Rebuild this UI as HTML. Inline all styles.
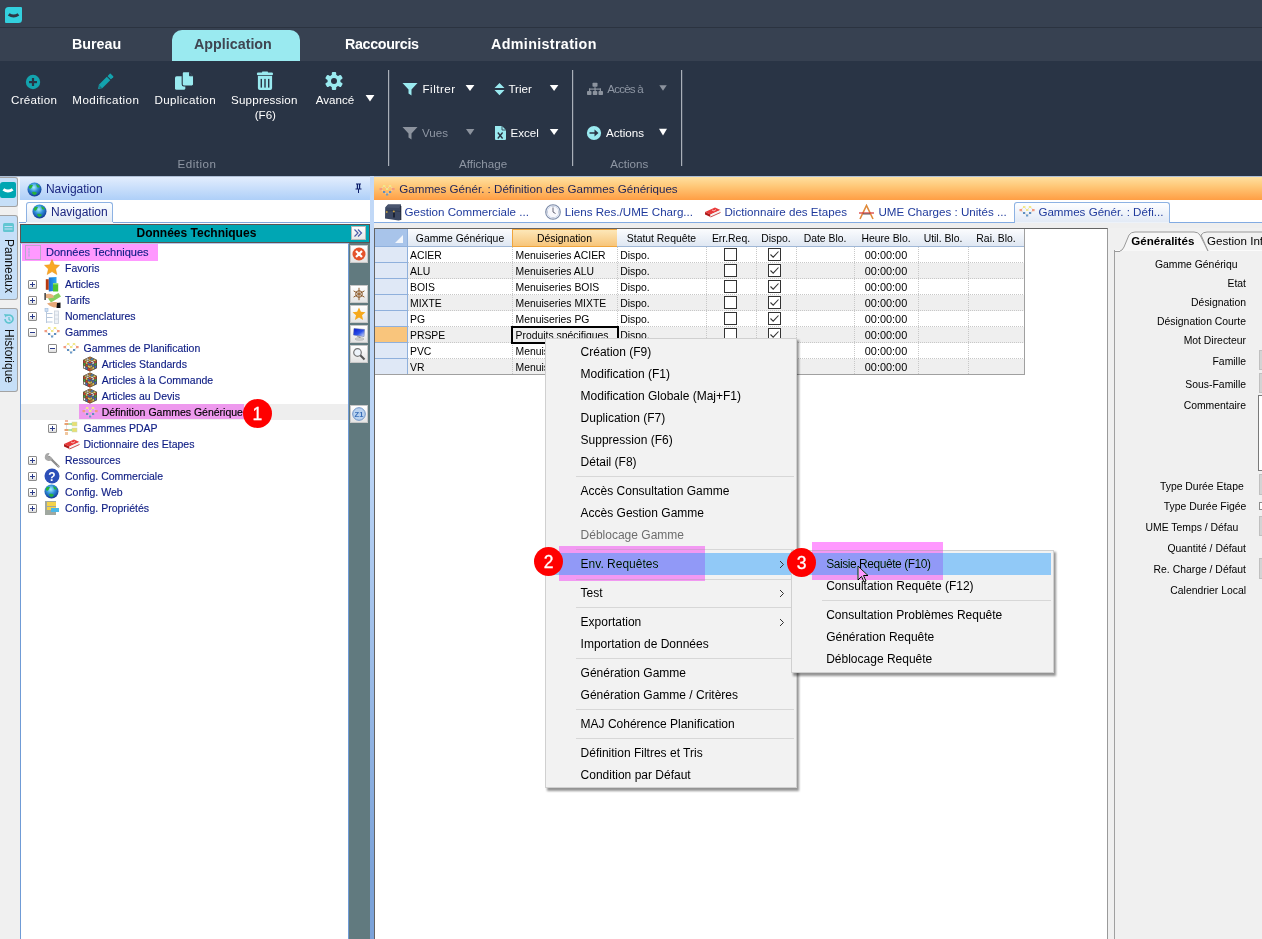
<!DOCTYPE html>
<html><head><meta charset="utf-8">
<style>
*{box-sizing:border-box;margin:0;padding:0}
html,body{width:1262px;height:939px;overflow:hidden;background:#f0f0f0;font-family:"Liberation Sans",sans-serif;position:relative}
.a{position:absolute}
.t{position:absolute;white-space:pre;line-height:1}
.s{-webkit-text-stroke:0.15px currentColor}
</style></head><body>

<div class="a" style="left:0px;top:0px;width:1262px;height:27px;background:#374151"></div>
<div class="a" style="left:0px;top:27px;width:1262px;height:1px;background:#2b3340"></div>
<div class="a" style="left:0px;top:28px;width:1262px;height:33px;background:#374151"></div>
<div class="a" style="left:5px;top:7px;width:17px;height:16px;background:#33d0de;border-radius:3.5px 1px 3.5px 1px"></div>
<svg class="a" style="left:5px;top:7px" width="17" height="16"><path d="M2.8 8.4 L4.6 6.2 Q8.6 8.8 12.6 6.2 L14.3 8.4 Q8.6 12.6 2.8 8.4Z" fill="#2f3746"/></svg>
<div class="a" style="left:172px;top:30px;width:128px;height:31px;background:#9aeaf0;border-radius:10px 10px 0 0"></div>
<div class="t " style="left:72.0px;top:37px;font-size:14.3px;color:#fff;font-weight:bold;">Bureau</div>
<div class="t " style="left:194.0px;top:37px;font-size:14.3px;color:#3f4652;font-weight:bold;">Application</div>
<div class="t " style="left:345.0px;top:37px;font-size:14.3px;color:#fff;font-weight:bold;letter-spacing:-0.34px">Raccourcis</div>
<div class="t " style="left:491.0px;top:37px;font-size:14.3px;color:#fff;font-weight:bold;letter-spacing:0.35px">Administration</div>
<div class="a" style="left:0px;top:61px;width:1262px;height:115px;background:#293445"></div>
<svg class="a" style="left:0;top:61px" width="700" height="115" viewBox="0 61 700 115">
 <!-- creation -->
 <circle cx="33" cy="82" r="7.2" fill="#13a3ae"/>
 <rect x="29" y="81" width="8" height="2.2" fill="#293445"/>
 <rect x="31.9" y="78" width="2.2" height="8" fill="#293445"/>
 <!-- pencil -->
 <g transform="translate(105,82) rotate(-45)" fill="#13a3ae">
  <path d="M-9.8 0 L-6.3 -2.4 V2.4 Z"/>
  <rect x="-6.3" y="-2.4" width="11.3" height="4.8"/>
  <rect x="5.9" y="-2.4" width="3.9" height="4.8" rx="0.6"/>
 </g>
 <path d="M99.2 86.6 L100.6 88" stroke="#283342" stroke-width="0.8"/>
 <!-- duplication -->
 <rect x="175" y="76.2" width="10.3" height="13.6" rx="1.6" fill="#9aeaf0"/>
 <path d="M182.2 73.2 Q182.2 71.6 183.8 71.6 H189.3 L193.6 75.9 V84.3 Q193.6 86 191.9 86 H183.8 Q182.2 86 182.2 84.3 Z" fill="#9aeaf0" stroke="#283342" stroke-width="1.1"/>
 <path d="M189.5 72.3 V75.8 H193" fill="#293445" stroke="#283342" stroke-width="0.9"/>
 <!-- trash -->
 <rect x="256.9" y="72.6" width="16.1" height="2.6" rx="1.2" fill="#9aeaf0"/>
 <rect x="262" y="71.6" width="6" height="1.6" rx="0.6" fill="#9aeaf0"/>
 <path d="M257.9 76 H272.1 V88 Q272.1 89.9 270.2 89.9 H259.8 Q257.9 89.9 257.9 88 Z" fill="#9aeaf0"/>
 <rect x="260.6" y="78.9" width="1.4" height="8.7" fill="#293445"/>
 <rect x="264.3" y="78.9" width="1.4" height="8.7" fill="#293445"/>
 <rect x="268" y="78.9" width="1.4" height="8.7" fill="#293445"/>
 <!-- gear -->
 <g transform="translate(334,81)" fill="#9aeaf0">
  <circle r="6.5"/>
  <g id="teeth"><rect x="-2.2" y="-9" width="4.4" height="18" rx="1"/><rect x="-2.2" y="-9" width="4.4" height="18" rx="1" transform="rotate(60)"/><rect x="-2.2" y="-9" width="4.4" height="18" rx="1" transform="rotate(120)"/></g>
  <circle r="3" fill="#293445"/>
 </g>
 <path d="M365.6 95 H374.4 L370 101.5 Z" fill="#fff"/>
 <rect x="388" y="70" width="1.2" height="96" fill="#a9afb8"/>
 <!-- filtrer -->
 <path d="M402.5 83 H417.5 L411.5 89.5 V95.5 L408.5 93.5 V89.5 Z" fill="#9aeaf0"/>
 <path d="M465.6 85 H474.4 L470 91 Z" fill="#fff"/>
 <!-- trier -->
 <path d="M499.5 83 L504.5 88 H494.5 Z M494.5 90 H504.5 L499.5 95.2 Z" fill="#9aeaf0"/>
 <path d="M549.8 85 H558.4 L554.1 91 Z" fill="#fff"/>
 <!-- vues -->
 <path d="M402.5 127 H417.5 L411.5 133.5 V139.5 L408.5 137.5 V133.5 Z" fill="#8c939e"/>
 <path d="M466 129 H474.4 L470.2 135 Z" fill="#8c939e"/>
 <!-- excel -->
 <path d="M495 126 H502 L506 130 V139 Q506 140 505 140 H496 Q495 140 495 139 Z" fill="#9aeaf0"/>
 <path d="M502 126 V130 H506" fill="none" stroke="#283342" stroke-width="0.8"/>
 <path d="M497.8 132.5 L502.6 138.5 M502.6 132.5 L497.8 138.5" stroke="#283342" stroke-width="1.3"/>
 <path d="M549.8 129 H558.4 L554.1 135 Z" fill="#fff"/>
 <rect x="572" y="70" width="1.2" height="96" fill="#a9afb8"/>
 <!-- acces a -->
 <g fill="#8c939e">
  <rect x="592.5" y="82.8" width="5" height="4" rx="0.8"/>
  <rect x="594.5" y="86.5" width="1" height="3"/>
  <rect x="589" y="88.5" width="12" height="1.2"/>
  <rect x="589" y="88.5" width="1.2" height="3"/><rect x="594.5" y="88.5" width="1.2" height="3"/><rect x="599.8" y="88.5" width="1.2" height="3"/>
  <rect x="587" y="91" width="4.5" height="4" rx="0.8"/><rect x="592.8" y="91" width="4.5" height="4" rx="0.8"/><rect x="598.5" y="91" width="4.5" height="4" rx="0.8"/>
 </g>
 <path d="M659.3 85.2 H666.8 L663 90.8 Z" fill="#8c939e"/>
 <!-- actions -->
 <circle cx="594" cy="133" r="7.1" fill="#9aeaf0"/>
 <path d="M589.5 132.2 H594.5 V129.5 L598.5 133 L594.5 136.5 V133.8 H589.5 Z" fill="#293445"/>
 <path d="M659 128.8 H667 L663 135.4 Z" fill="#fff"/>
 <rect x="681" y="70" width="1.2" height="96" fill="#a9afb8"/>
</svg>
<div class="t " style="left:11.0px;top:94px;font-size:11.6px;color:#ffffff;font-weight:normal;letter-spacing:0.3px">Création</div>
<div class="t " style="left:72.3px;top:94px;font-size:11.6px;color:#ffffff;font-weight:normal;letter-spacing:0.43px">Modification</div>
<div class="t " style="left:154.4px;top:94px;font-size:11.6px;color:#ffffff;font-weight:normal;letter-spacing:0.39px">Duplication</div>
<div class="t " style="left:231.0px;top:94px;font-size:11.6px;color:#ffffff;font-weight:normal;letter-spacing:0.2px">Suppression</div>
<div class="t " style="left:254.7px;top:109px;font-size:11.6px;color:#ffffff;font-weight:normal;letter-spacing:0px">(F6)</div>
<div class="t " style="left:315.7px;top:94px;font-size:11.6px;color:#ffffff;font-weight:normal;letter-spacing:0px">Avancé</div>
<div class="t " style="left:422.5px;top:83px;font-size:11.6px;color:#ffffff;font-weight:normal;letter-spacing:0.5px">Filtrer</div>
<div class="t " style="left:508.4px;top:83px;font-size:11.6px;color:#ffffff;font-weight:normal;letter-spacing:0px">Trier</div>
<div class="t " style="left:510.5px;top:127px;font-size:11.6px;color:#ffffff;font-weight:normal;letter-spacing:0px">Excel</div>
<div class="t " style="left:606.0px;top:127px;font-size:11.6px;color:#ffffff;font-weight:normal;letter-spacing:0px">Actions</div>
<div class="t " style="left:177.5px;top:158px;font-size:11.6px;color:#8e96a3;font-weight:normal;letter-spacing:0.48px">Edition</div>
<div class="t " style="left:422.0px;top:127px;font-size:11.6px;color:#8e96a3;font-weight:normal;letter-spacing:0px">Vues</div>
<div class="t " style="left:459.0px;top:158px;font-size:11.6px;color:#8e96a3;font-weight:normal;letter-spacing:0px">Affichage</div>
<div class="t " style="left:607.3px;top:83px;font-size:11.6px;color:#8e96a3;font-weight:normal;letter-spacing:-0.8px">Accès à</div>
<div class="t " style="left:610.3px;top:158px;font-size:11.6px;color:#8e96a3;font-weight:normal;letter-spacing:0px">Actions</div>
<div class="a" style="left:0px;top:176px;width:1262px;height:1px;background:#aebfd6"></div>
<div class="a" style="left:0px;top:177px;width:1262px;height:762px;background:#f0f0f0"></div>
<div class="a" style="left:0px;top:177px;width:18px;height:30px;background:#c6dff8;border:1px solid #a3a3a3;border-left:none;border-radius:0 3px 3px 0"></div>
<div class="a" style="left:0px;top:182px;width:16px;height:16px;background:#00a6b2;border-radius:3px 2px 3px 2px"></div>
<svg class="a" style="left:0;top:182px" width="16" height="16"><path d="M2.5 8.4 L4.2 6.3 Q8 8.8 11.8 6.3 L13.5 8.4 Q8 12.4 2.5 8.4Z" fill="#fff"/></svg>
<div class="a" style="left:0px;top:215px;width:18px;height:85px;background:#c6dff8;border:1px solid #a3a3a3;border-left:none;border-radius:0 3px 3px 0"></div>
<div class="a" style="left:0px;top:308px;width:18px;height:84px;background:#c6dff8;border:1px solid #a3a3a3;border-left:none;border-radius:0 3px 3px 0"></div>
<svg class="a" style="left:3px;top:223px" width="11" height="10"><rect x="0" y="0" width="11" height="9" rx="1.5" fill="#62c6d2"/><rect x="1.5" y="3" width="8" height="1" fill="#c6dff8"/><rect x="1.5" y="5.5" width="8" height="1" fill="#c6dff8"/></svg>
<div class="t" style="left:3px;top:239px;font-size:12px;color:#111;transform-origin:0 0;transform:translate(11.5px,0) rotate(90deg)">Panneaux</div>
<svg class="a" style="left:3px;top:313px" width="11" height="12"><path d="M2 6 A4 4 0 1 0 4 2.5" fill="none" stroke="#5cc4cf" stroke-width="1.6"/><path d="M1 1 L5 1.5 L2.5 4.5Z" fill="#5cc4cf"/><path d="M6 4 V6.5 L7.5 7.5" stroke="#5cc4cf" stroke-width="1.2" fill="none"/></svg>
<div class="t" style="left:3px;top:329px;font-size:12px;color:#111;transform-origin:0 0;transform:translate(11.5px,0) rotate(90deg)">Historique</div>
<div class="a" style="left:18px;top:177px;width:2px;height:23px;background:#f4f6f9"></div>
<div class="a" style="left:20px;top:177px;width:350px;height:23px;background:linear-gradient(#e2edfd,#aecff8)"></div>
<svg class="a" style="left:27px;top:182px" width="15" height="15" viewBox="0 0 15 15"><defs><radialGradient id="gg1" cx="0.45" cy="0.35" r="0.7"><stop offset="0" stop-color="#a8f0ff"/><stop offset="0.45" stop-color="#2f8fd8"/><stop offset="1" stop-color="#0c2a8a"/></radialGradient></defs><circle cx="7.5" cy="7.5" r="7" fill="url(#gg1)"/><path d="M2 4 Q4 2 6 3 Q5 6 3 7 Q1.5 6 2 4Z M9 2 Q12 3 13 5 Q11 6 10 5Z M5 10 Q8 9 10 11 Q9 13 7 13 Q5 12 5 10Z" fill="#27b33a"/></svg>
<div class="t " style="left:45.9px;top:183px;font-size:12px;color:#1b2780;font-weight:normal;">Navigation</div>
<svg class="a" style="left:354px;top:183px" width="9" height="10"><path d="M2 0.5 H7 V1.5 H6.2 V5.5 H7.5 V6.5 H5 V10 H4 V6.5 H1.5 V5.5 H2.8 V1.5 H2Z" fill="#0e1f6a"/><rect x="4" y="1.5" width="1" height="4" fill="#b9d5f7"/></svg>
<div class="a" style="left:18px;top:200px;width:352px;height:22px;background:#fff"></div>
<div class="a" style="left:26px;top:202px;width:87px;height:21px;background:linear-gradient(#fdfeff,#e2eaf5);border:1px solid #8db2e3;border-bottom:none;border-radius:3px 3px 0 0"></div>
<svg class="a" style="left:32px;top:204px" width="15" height="15" viewBox="0 0 15 15"><defs><radialGradient id="gg2" cx="0.45" cy="0.35" r="0.7"><stop offset="0" stop-color="#a8f0ff"/><stop offset="0.45" stop-color="#2f8fd8"/><stop offset="1" stop-color="#0c2a8a"/></radialGradient></defs><circle cx="7.5" cy="7.5" r="7" fill="url(#gg2)"/><path d="M2 4 Q4 2 6 3 Q5 6 3 7 Q1.5 6 2 4Z M9 2 Q12 3 13 5 Q11 6 10 5Z M5 10 Q8 9 10 11 Q9 13 7 13 Q5 12 5 10Z" fill="#27b33a"/></svg>
<div class="t " style="left:51.0px;top:206px;font-size:12px;color:#1b2780;font-weight:normal;">Navigation</div>
<div class="a" style="left:19px;top:222px;width:351px;height:1px;background:#7fa7de"></div>
<div class="a" style="left:26px;top:222px;width:87px;height:1px;background:#eef3fa"></div>
<div class="a" style="left:19px;top:223px;width:351px;height:1px;background:#fbfbfb"></div>
<div class="a" style="left:20px;top:224px;width:350px;height:19px;background:#00a6b4;border:1px solid #5e5252"></div>
<div class="t " style="left:136.5px;top:227px;font-size:12px;color:#000;font-weight:bold;">Données Techniques</div>
<div class="a" style="left:351px;top:226px;width:15px;height:14px;background:linear-gradient(#fff,#e9e9e9);border:1px solid #b9b9b9"></div>
<svg class="a" style="left:353px;top:228px" width="11" height="10"><path d="M1.5 1.5 L5 5 L1.5 8.5 M5 1.5 L8.5 5 L5 8.5" stroke="#4c5ca8" stroke-width="1.2" fill="none"/></svg>
<div class="a" style="left:20px;top:243px;width:329px;height:696px;background:#fff;border-left:1px solid #6f9bd6;border-right:1px solid #6f9bd6;border-top:1px solid #b4c8ea"></div>
<div class="a" style="left:349px;top:243px;width:21px;height:696px;background:#617a7f"></div>
<div class="a" style="left:370px;top:176px;width:4px;height:763px;background:linear-gradient(#c2d9f7 0px,#b9d3f5 300px,#7ba2d9 700px)"></div>
<div class="a" style="left:374px;top:228px;width:1px;height:711px;background:#5e6470"></div>
<div class="a" style="left:350px;top:245px;width:18px;height:18px;background:linear-gradient(#ffffff,#e4e4e4);border:1px solid #c8c8c8"></div>
<svg class="a" style="left:352px;top:247px" width="14" height="14"><circle cx="7" cy="7" r="6.5" fill="#e4532b"/><path d="M4 4 L10 10 M10 4 L4 10" stroke="#fff" stroke-width="2.2"/></svg>
<div class="a" style="left:350px;top:285px;width:18px;height:18px;background:linear-gradient(#ffffff,#e4e4e4);border:1px solid #c8c8c8"></div>
<svg class="a" style="left:352px;top:287px" width="14" height="14"><g stroke="#8b5a2b" fill="none"><circle cx="7" cy="7" r="3.3" stroke-width="1"/><path d="M7 0.8 V13.2 M1.6 3.9 L12.4 10.1 M1.6 10.1 L12.4 3.9" stroke-width="1"/></g><circle cx="7" cy="7" r="1.2" fill="#a07040"/></svg>
<div class="a" style="left:350px;top:305px;width:18px;height:18px;background:linear-gradient(#ffffff,#e4e4e4);border:1px solid #c8c8c8"></div>
<svg class="a" style="left:352px;top:307px" width="14" height="14"><path d="M7 0.5 L8.9 4.8 L13.5 5.2 L10 8.3 L11.1 13 L7 10.5 L2.9 13 L4 8.3 L0.5 5.2 L5.1 4.8Z" fill="#f6a81c"/></svg>
<div class="a" style="left:350px;top:325px;width:18px;height:18px;background:linear-gradient(#ffffff,#e4e4e4);border:1px solid #c8c8c8"></div>
<svg class="a" style="left:352px;top:327px" width="14" height="14"><defs><linearGradient id="mon" x1="0" y1="0" x2="1" y2="1"><stop offset="0" stop-color="#0a1ad0"/><stop offset="0.55" stop-color="#2a50e8"/><stop offset="1" stop-color="#e8f0ff"/></linearGradient></defs><path d="M2 1.5 L12.5 2.5 L12 9.5 L1.5 8Z" fill="url(#mon)" stroke="#5060a0" stroke-width="0.5"/><path d="M5 9.5 L8.5 10 L8.5 11" stroke="#b0b0b0" stroke-width="1"/><ellipse cx="7.5" cy="12" rx="4.5" ry="1.3" fill="#d0d0d0" stroke="#a0a0a0" stroke-width="0.5"/></svg>
<div class="a" style="left:350px;top:345px;width:18px;height:18px;background:linear-gradient(#ffffff,#e4e4e4);border:1px solid #c8c8c8"></div>
<svg class="a" style="left:352px;top:347px" width="14" height="14"><circle cx="5.5" cy="5.5" r="3.8" fill="#eef4fb" stroke="#777" stroke-width="1.2"/><path d="M8.3 8.3 L12.5 12.5" stroke="#555" stroke-width="2"/></svg>
<div class="a" style="left:350px;top:405px;width:18px;height:18px;background:linear-gradient(#ffffff,#e4e4e4);border:1px solid #c8c8c8"></div>
<svg class="a" style="left:352px;top:407px" width="14" height="14"><circle cx="7" cy="7" r="6.3" fill="#b9d2ef" stroke="#6d93c6" stroke-width="1"/><text x="7" y="10" font-size="7.5" font-family="Liberation Sans" font-weight="bold" text-anchor="middle" fill="#3a6fb8">Z1</text></svg>
<div class="a" style="left:21px;top:404px;width:327px;height:16px;background:#eeeeee"></div>
<div class="a" style="left:22px;top:244px;width:136px;height:17px;background:#ff99ff;mix-blend-mode:darken"></div>
<div class="a" style="left:79px;top:404px;width:165px;height:15px;background:#ff99ff;mix-blend-mode:darken"></div>
<svg class="a" style="left:25px;top:245px" width="16" height="16"><rect x="0.5" y="0.5" width="15" height="14" fill="none" stroke="#b9a9c9" stroke-width="1"/><path d="M4 3 V12 M3 4 H5 M3 7 H5 M3 10 H5" stroke="#b0b0d8" stroke-width="0.8"/></svg>
<div class="t s" style="left:46.0px;top:247px;font-size:11px;color:#0e1d84;font-weight:normal;">Données Techniques</div>
<svg class="a" style="left:44px;top:259px" width="16" height="17"><path d="M8 0.5 L10.3 5.8 L15.5 6.3 L11.6 10 L12.8 15.5 L8 12.6 L3.2 15.5 L4.4 10 L0.5 6.3 L5.7 5.8Z" fill="#f9a825" stroke="#e88a10" stroke-width="0.5"/></svg>
<div class="t s" style="left:65.0px;top:263px;font-size:10.5px;color:#0e1d84;font-weight:normal;">Favoris</div>
<div class="a" style="left:28px;top:280px;width:9px;height:9px;background:linear-gradient(#fff 40%,#dcdcdc);border:1px solid #8c8c8c;border-radius:1px"></div>
<div class="a" style="left:30px;top:284px;width:5px;height:1px;background:#2b3b8a"></div>
<div class="a" style="left:32px;top:282px;width:1px;height:5px;background:#2b3b8a"></div>
<svg class="a" style="left:44px;top:276px" width="16" height="16"><defs><linearGradient id="bk" x1="0" x2="1"><stop offset="0" stop-color="#1a6fd0"/><stop offset="1" stop-color="#29a8f5"/></linearGradient></defs><rect x="1.8" y="3.2" width="3" height="10.6" fill="#b83a10"/><path d="M4.8 1.5 L12.5 1 V14.8 L4.8 15.4Z" fill="url(#bk)"/><rect x="9" y="7.2" width="5.2" height="8.2" rx="0.5" fill="#4cc430"/><rect x="9" y="7.2" width="5.2" height="1.2" fill="#9fe880"/></svg>
<div class="t s" style="left:65.0px;top:279px;font-size:10.5px;color:#0e1d84;font-weight:normal;">Articles</div>
<div class="a" style="left:28px;top:296px;width:9px;height:9px;background:linear-gradient(#fff 40%,#dcdcdc);border:1px solid #8c8c8c;border-radius:1px"></div>
<div class="a" style="left:30px;top:300px;width:5px;height:1px;background:#2b3b8a"></div>
<div class="a" style="left:32px;top:298px;width:1px;height:5px;background:#2b3b8a"></div>
<svg class="a" style="left:44px;top:292px" width="17" height="17"><path d="M4 6.5 L14.5 1 L17 4.5 L7 10.5Z" fill="#86d060"/><path d="M1.5 2.5 Q5 1 9 3 L10 5.5 Q6 6.5 2 6Z" fill="#e8b080"/><path d="M3 11.5 Q7 9.5 12 10 L16 11.5 V15 L10 15.5 Q5 14 3 11.5Z" fill="#e5a878"/><rect x="0.5" y="1" width="1.2" height="7" fill="#111"/><path d="M13 11 L16.5 10.5 V16 H12.5Z" fill="#111"/></svg>
<div class="t s" style="left:65.0px;top:295px;font-size:10.5px;color:#0e1d84;font-weight:normal;">Tarifs</div>
<div class="a" style="left:28px;top:312px;width:9px;height:9px;background:linear-gradient(#fff 40%,#dcdcdc);border:1px solid #8c8c8c;border-radius:1px"></div>
<div class="a" style="left:30px;top:316px;width:5px;height:1px;background:#2b3b8a"></div>
<div class="a" style="left:32px;top:314px;width:1px;height:5px;background:#2b3b8a"></div>
<svg class="a" style="left:44px;top:308px" width="16" height="16"><rect x="1" y="0.5" width="3" height="3" fill="#cfe0f4" stroke="#9ab8dc" stroke-width="0.6"/><path d="M2.5 3.5 V15 M2.5 5.5 H8.5 M2.5 9.5 H8.5 M2.5 14 H8.5" stroke="#b8c8dc" stroke-width="1"/><rect x="10.5" y="3" width="4" height="12.5" fill="#eef2f7" stroke="#c8d0da" stroke-width="0.8"/><path d="M10.5 7 H14.5 M10.5 11 H14.5" stroke="#c8d0da" stroke-width="0.8"/></svg>
<div class="t s" style="left:65.0px;top:311px;font-size:10.5px;color:#0e1d84;font-weight:normal;">Nomenclatures</div>
<div class="a" style="left:28px;top:328px;width:9px;height:9px;background:linear-gradient(#fff 40%,#dcdcdc);border:1px solid #8c8c8c;border-radius:1px"></div>
<div class="a" style="left:30px;top:332px;width:5px;height:1px;background:#2b3b8a"></div>
<svg class="a" style="left:44px;top:324px" width="16" height="16"><g fill="none" stroke="#e6ddd0" stroke-width="0.8"><path d="M1.5 7 L5 4 L8 7 L11 4 L14.5 7 L11 10 L8 12.5 L5 10Z"/></g><rect x="4" y="3" width="2.4" height="2" fill="#f2e88a"/><rect x="9.8" y="3" width="2.4" height="2" fill="#f2e88a"/><rect x="7" y="6" width="2.4" height="2" fill="#efe78a"/><rect x="0.5" y="6" width="2.6" height="2.2" fill="#f09a80"/><rect x="13" y="6" width="2.6" height="2.2" fill="#f09a80"/><rect x="4" y="9" width="2.2" height="2" fill="#5f8fc0"/><rect x="10" y="9" width="2.2" height="2" fill="#5f8fc0"/><rect x="7" y="11.5" width="2.2" height="2" fill="#6a9ac8"/></svg>
<div class="t s" style="left:65.0px;top:327px;font-size:10.5px;color:#0e1d84;font-weight:normal;">Gammes</div>
<div class="a" style="left:47.5px;top:344px;width:9px;height:9px;background:linear-gradient(#fff 40%,#dcdcdc);border:1px solid #8c8c8c;border-radius:1px"></div>
<div class="a" style="left:49.5px;top:348px;width:5px;height:1px;background:#2b3b8a"></div>
<svg class="a" style="left:63px;top:340px" width="16" height="16"><g fill="none" stroke="#e6ddd0" stroke-width="0.8"><path d="M1.5 7 L5 4 L8 7 L11 4 L14.5 7 L11 10 L8 12.5 L5 10Z"/></g><rect x="4" y="3" width="2.4" height="2" fill="#f2e88a"/><rect x="9.8" y="3" width="2.4" height="2" fill="#f2e88a"/><rect x="7" y="6" width="2.4" height="2" fill="#efe78a"/><rect x="0.5" y="6" width="2.6" height="2.2" fill="#f09a80"/><rect x="13" y="6" width="2.6" height="2.2" fill="#f09a80"/><rect x="4" y="9" width="2.2" height="2" fill="#5f8fc0"/><rect x="10" y="9" width="2.2" height="2" fill="#5f8fc0"/><rect x="7" y="11.5" width="2.2" height="2" fill="#6a9ac8"/></svg>
<div class="t s" style="left:83.5px;top:343px;font-size:10.5px;color:#0e1d84;font-weight:normal;">Gammes de Planification</div>
<svg class="a" style="left:82px;top:356px" width="16" height="16"><path d="M8 0.6 L15 4 V12.3 L8 15.6 L1 12.3 V4Z" fill="#5a4a38"/><polygon points="1.50,4.20 3.67,3.13 5.83,4.20 3.67,5.27" fill="#f0e060" stroke="#5a4a38" stroke-width="0.45"/><polygon points="1.50,4.20 3.67,5.27 3.67,7.87 1.50,6.80" fill="#e03a2a" stroke="#5a4a38" stroke-width="0.45"/><polygon points="8.00,7.40 10.17,6.33 10.17,8.87 8.00,9.93" fill="#3a70d0" stroke="#5a4a38" stroke-width="0.45"/><polygon points="3.67,3.13 5.83,2.07 8.00,3.13 5.83,4.20" fill="#f4f4f4" stroke="#5a4a38" stroke-width="0.45"/><polygon points="3.67,5.27 5.83,6.33 5.83,8.93 3.67,7.87" fill="#f0e060" stroke="#5a4a38" stroke-width="0.45"/><polygon points="10.17,6.33 12.33,5.27 12.33,7.80 10.17,8.87" fill="#f4f4f4" stroke="#5a4a38" stroke-width="0.45"/><polygon points="5.83,2.07 8.00,1.00 10.17,2.07 8.00,3.13" fill="#e88830" stroke="#5a4a38" stroke-width="0.45"/><polygon points="5.83,6.33 8.00,7.40 8.00,10.00 5.83,8.93" fill="#3a70d0" stroke="#5a4a38" stroke-width="0.45"/><polygon points="12.33,5.27 14.50,4.20 14.50,6.73 12.33,7.80" fill="#e03a2a" stroke="#5a4a38" stroke-width="0.45"/><polygon points="3.67,5.27 5.83,4.20 8.00,5.27 5.83,6.33" fill="#f4f4f4" stroke="#5a4a38" stroke-width="0.45"/><polygon points="1.50,6.80 3.67,7.87 3.67,10.47 1.50,9.40" fill="#40b040" stroke="#5a4a38" stroke-width="0.45"/><polygon points="8.00,9.93 10.17,8.87 10.17,11.40 8.00,12.47" fill="#f0e060" stroke="#5a4a38" stroke-width="0.45"/><polygon points="5.83,4.20 8.00,3.13 10.17,4.20 8.00,5.27" fill="#f0e060" stroke="#5a4a38" stroke-width="0.45"/><polygon points="3.67,7.87 5.83,8.93 5.83,11.53 3.67,10.47" fill="#e03a2a" stroke="#5a4a38" stroke-width="0.45"/><polygon points="10.17,8.87 12.33,7.80 12.33,10.33 10.17,11.40" fill="#3a70d0" stroke="#5a4a38" stroke-width="0.45"/><polygon points="8.00,3.13 10.17,2.07 12.33,3.13 10.17,4.20" fill="#4a9ae0" stroke="#5a4a38" stroke-width="0.45"/><polygon points="5.83,8.93 8.00,10.00 8.00,12.60 5.83,11.53" fill="#f0e060" stroke="#5a4a38" stroke-width="0.45"/><polygon points="12.33,7.80 14.50,6.73 14.50,9.27 12.33,10.33" fill="#40b040" stroke="#5a4a38" stroke-width="0.45"/><polygon points="5.83,6.33 8.00,5.27 10.17,6.33 8.00,7.40" fill="#e84030" stroke="#5a4a38" stroke-width="0.45"/><polygon points="1.50,9.40 3.67,10.47 3.67,13.07 1.50,12.00" fill="#f4f4f4" stroke="#5a4a38" stroke-width="0.45"/><polygon points="8.00,12.47 10.17,11.40 10.17,13.93 8.00,15.00" fill="#e88830" stroke="#5a4a38" stroke-width="0.45"/><polygon points="8.00,5.27 10.17,4.20 12.33,5.27 10.17,6.33" fill="#f4f4f4" stroke="#5a4a38" stroke-width="0.45"/><polygon points="3.67,10.47 5.83,11.53 5.83,14.13 3.67,13.07" fill="#3a70d0" stroke="#5a4a38" stroke-width="0.45"/><polygon points="10.17,11.40 12.33,10.33 12.33,12.87 10.17,13.93" fill="#f0e060" stroke="#5a4a38" stroke-width="0.45"/><polygon points="10.17,4.20 12.33,3.13 14.50,4.20 12.33,5.27" fill="#f0e060" stroke="#5a4a38" stroke-width="0.45"/><polygon points="5.83,11.53 8.00,12.60 8.00,15.20 5.83,14.13" fill="#e03a2a" stroke="#5a4a38" stroke-width="0.45"/><polygon points="12.33,10.33 14.50,9.27 14.50,11.80 12.33,12.87" fill="#3a70d0" stroke="#5a4a38" stroke-width="0.45"/></svg>
<div class="t s" style="left:101.7px;top:359px;font-size:10.5px;color:#0e1d84;font-weight:normal;">Articles Standards</div>
<svg class="a" style="left:82px;top:372px" width="16" height="16"><path d="M8 0.6 L15 4 V12.3 L8 15.6 L1 12.3 V4Z" fill="#5a4a38"/><polygon points="1.50,4.20 3.67,3.13 5.83,4.20 3.67,5.27" fill="#f0e060" stroke="#5a4a38" stroke-width="0.45"/><polygon points="1.50,4.20 3.67,5.27 3.67,7.87 1.50,6.80" fill="#e03a2a" stroke="#5a4a38" stroke-width="0.45"/><polygon points="8.00,7.40 10.17,6.33 10.17,8.87 8.00,9.93" fill="#3a70d0" stroke="#5a4a38" stroke-width="0.45"/><polygon points="3.67,3.13 5.83,2.07 8.00,3.13 5.83,4.20" fill="#f4f4f4" stroke="#5a4a38" stroke-width="0.45"/><polygon points="3.67,5.27 5.83,6.33 5.83,8.93 3.67,7.87" fill="#f0e060" stroke="#5a4a38" stroke-width="0.45"/><polygon points="10.17,6.33 12.33,5.27 12.33,7.80 10.17,8.87" fill="#f4f4f4" stroke="#5a4a38" stroke-width="0.45"/><polygon points="5.83,2.07 8.00,1.00 10.17,2.07 8.00,3.13" fill="#e88830" stroke="#5a4a38" stroke-width="0.45"/><polygon points="5.83,6.33 8.00,7.40 8.00,10.00 5.83,8.93" fill="#3a70d0" stroke="#5a4a38" stroke-width="0.45"/><polygon points="12.33,5.27 14.50,4.20 14.50,6.73 12.33,7.80" fill="#e03a2a" stroke="#5a4a38" stroke-width="0.45"/><polygon points="3.67,5.27 5.83,4.20 8.00,5.27 5.83,6.33" fill="#f4f4f4" stroke="#5a4a38" stroke-width="0.45"/><polygon points="1.50,6.80 3.67,7.87 3.67,10.47 1.50,9.40" fill="#40b040" stroke="#5a4a38" stroke-width="0.45"/><polygon points="8.00,9.93 10.17,8.87 10.17,11.40 8.00,12.47" fill="#f0e060" stroke="#5a4a38" stroke-width="0.45"/><polygon points="5.83,4.20 8.00,3.13 10.17,4.20 8.00,5.27" fill="#f0e060" stroke="#5a4a38" stroke-width="0.45"/><polygon points="3.67,7.87 5.83,8.93 5.83,11.53 3.67,10.47" fill="#e03a2a" stroke="#5a4a38" stroke-width="0.45"/><polygon points="10.17,8.87 12.33,7.80 12.33,10.33 10.17,11.40" fill="#3a70d0" stroke="#5a4a38" stroke-width="0.45"/><polygon points="8.00,3.13 10.17,2.07 12.33,3.13 10.17,4.20" fill="#4a9ae0" stroke="#5a4a38" stroke-width="0.45"/><polygon points="5.83,8.93 8.00,10.00 8.00,12.60 5.83,11.53" fill="#f0e060" stroke="#5a4a38" stroke-width="0.45"/><polygon points="12.33,7.80 14.50,6.73 14.50,9.27 12.33,10.33" fill="#40b040" stroke="#5a4a38" stroke-width="0.45"/><polygon points="5.83,6.33 8.00,5.27 10.17,6.33 8.00,7.40" fill="#e84030" stroke="#5a4a38" stroke-width="0.45"/><polygon points="1.50,9.40 3.67,10.47 3.67,13.07 1.50,12.00" fill="#f4f4f4" stroke="#5a4a38" stroke-width="0.45"/><polygon points="8.00,12.47 10.17,11.40 10.17,13.93 8.00,15.00" fill="#e88830" stroke="#5a4a38" stroke-width="0.45"/><polygon points="8.00,5.27 10.17,4.20 12.33,5.27 10.17,6.33" fill="#f4f4f4" stroke="#5a4a38" stroke-width="0.45"/><polygon points="3.67,10.47 5.83,11.53 5.83,14.13 3.67,13.07" fill="#3a70d0" stroke="#5a4a38" stroke-width="0.45"/><polygon points="10.17,11.40 12.33,10.33 12.33,12.87 10.17,13.93" fill="#f0e060" stroke="#5a4a38" stroke-width="0.45"/><polygon points="10.17,4.20 12.33,3.13 14.50,4.20 12.33,5.27" fill="#f0e060" stroke="#5a4a38" stroke-width="0.45"/><polygon points="5.83,11.53 8.00,12.60 8.00,15.20 5.83,14.13" fill="#e03a2a" stroke="#5a4a38" stroke-width="0.45"/><polygon points="12.33,10.33 14.50,9.27 14.50,11.80 12.33,12.87" fill="#3a70d0" stroke="#5a4a38" stroke-width="0.45"/></svg>
<div class="t s" style="left:101.7px;top:375px;font-size:10.5px;color:#0e1d84;font-weight:normal;">Articles à la Commande</div>
<svg class="a" style="left:82px;top:388px" width="16" height="16"><path d="M8 0.6 L15 4 V12.3 L8 15.6 L1 12.3 V4Z" fill="#5a4a38"/><polygon points="1.50,4.20 3.67,3.13 5.83,4.20 3.67,5.27" fill="#f0e060" stroke="#5a4a38" stroke-width="0.45"/><polygon points="1.50,4.20 3.67,5.27 3.67,7.87 1.50,6.80" fill="#e03a2a" stroke="#5a4a38" stroke-width="0.45"/><polygon points="8.00,7.40 10.17,6.33 10.17,8.87 8.00,9.93" fill="#3a70d0" stroke="#5a4a38" stroke-width="0.45"/><polygon points="3.67,3.13 5.83,2.07 8.00,3.13 5.83,4.20" fill="#f4f4f4" stroke="#5a4a38" stroke-width="0.45"/><polygon points="3.67,5.27 5.83,6.33 5.83,8.93 3.67,7.87" fill="#f0e060" stroke="#5a4a38" stroke-width="0.45"/><polygon points="10.17,6.33 12.33,5.27 12.33,7.80 10.17,8.87" fill="#f4f4f4" stroke="#5a4a38" stroke-width="0.45"/><polygon points="5.83,2.07 8.00,1.00 10.17,2.07 8.00,3.13" fill="#e88830" stroke="#5a4a38" stroke-width="0.45"/><polygon points="5.83,6.33 8.00,7.40 8.00,10.00 5.83,8.93" fill="#3a70d0" stroke="#5a4a38" stroke-width="0.45"/><polygon points="12.33,5.27 14.50,4.20 14.50,6.73 12.33,7.80" fill="#e03a2a" stroke="#5a4a38" stroke-width="0.45"/><polygon points="3.67,5.27 5.83,4.20 8.00,5.27 5.83,6.33" fill="#f4f4f4" stroke="#5a4a38" stroke-width="0.45"/><polygon points="1.50,6.80 3.67,7.87 3.67,10.47 1.50,9.40" fill="#40b040" stroke="#5a4a38" stroke-width="0.45"/><polygon points="8.00,9.93 10.17,8.87 10.17,11.40 8.00,12.47" fill="#f0e060" stroke="#5a4a38" stroke-width="0.45"/><polygon points="5.83,4.20 8.00,3.13 10.17,4.20 8.00,5.27" fill="#f0e060" stroke="#5a4a38" stroke-width="0.45"/><polygon points="3.67,7.87 5.83,8.93 5.83,11.53 3.67,10.47" fill="#e03a2a" stroke="#5a4a38" stroke-width="0.45"/><polygon points="10.17,8.87 12.33,7.80 12.33,10.33 10.17,11.40" fill="#3a70d0" stroke="#5a4a38" stroke-width="0.45"/><polygon points="8.00,3.13 10.17,2.07 12.33,3.13 10.17,4.20" fill="#4a9ae0" stroke="#5a4a38" stroke-width="0.45"/><polygon points="5.83,8.93 8.00,10.00 8.00,12.60 5.83,11.53" fill="#f0e060" stroke="#5a4a38" stroke-width="0.45"/><polygon points="12.33,7.80 14.50,6.73 14.50,9.27 12.33,10.33" fill="#40b040" stroke="#5a4a38" stroke-width="0.45"/><polygon points="5.83,6.33 8.00,5.27 10.17,6.33 8.00,7.40" fill="#e84030" stroke="#5a4a38" stroke-width="0.45"/><polygon points="1.50,9.40 3.67,10.47 3.67,13.07 1.50,12.00" fill="#f4f4f4" stroke="#5a4a38" stroke-width="0.45"/><polygon points="8.00,12.47 10.17,11.40 10.17,13.93 8.00,15.00" fill="#e88830" stroke="#5a4a38" stroke-width="0.45"/><polygon points="8.00,5.27 10.17,4.20 12.33,5.27 10.17,6.33" fill="#f4f4f4" stroke="#5a4a38" stroke-width="0.45"/><polygon points="3.67,10.47 5.83,11.53 5.83,14.13 3.67,13.07" fill="#3a70d0" stroke="#5a4a38" stroke-width="0.45"/><polygon points="10.17,11.40 12.33,10.33 12.33,12.87 10.17,13.93" fill="#f0e060" stroke="#5a4a38" stroke-width="0.45"/><polygon points="10.17,4.20 12.33,3.13 14.50,4.20 12.33,5.27" fill="#f0e060" stroke="#5a4a38" stroke-width="0.45"/><polygon points="5.83,11.53 8.00,12.60 8.00,15.20 5.83,14.13" fill="#e03a2a" stroke="#5a4a38" stroke-width="0.45"/><polygon points="12.33,10.33 14.50,9.27 14.50,11.80 12.33,12.87" fill="#3a70d0" stroke="#5a4a38" stroke-width="0.45"/></svg>
<div class="t s" style="left:101.7px;top:391px;font-size:10.5px;color:#0e1d84;font-weight:normal;">Articles au Devis</div>
<svg class="a" style="left:82px;top:404px" width="16" height="16"><g fill="none" stroke="#e6ddd0" stroke-width="0.8"><path d="M1.5 7 L5 4 L8 7 L11 4 L14.5 7 L11 10 L8 12.5 L5 10Z"/></g><rect x="4" y="3" width="2.4" height="2" fill="#f2e88a"/><rect x="9.8" y="3" width="2.4" height="2" fill="#f2e88a"/><rect x="7" y="6" width="2.4" height="2" fill="#efe78a"/><rect x="0.5" y="6" width="2.6" height="2.2" fill="#f09a80"/><rect x="13" y="6" width="2.6" height="2.2" fill="#f09a80"/><rect x="4" y="9" width="2.2" height="2" fill="#5f8fc0"/><rect x="10" y="9" width="2.2" height="2" fill="#5f8fc0"/><rect x="7" y="11.5" width="2.2" height="2" fill="#6a9ac8"/></svg>
<div class="t s" style="left:101.7px;top:407px;font-size:10.5px;color:#000;font-weight:normal;">Définition Gammes Générique</div>
<div class="a" style="left:47.5px;top:424px;width:9px;height:9px;background:linear-gradient(#fff 40%,#dcdcdc);border:1px solid #8c8c8c;border-radius:1px"></div>
<div class="a" style="left:49.5px;top:428px;width:5px;height:1px;background:#2b3b8a"></div>
<div class="a" style="left:51.5px;top:426px;width:1px;height:5px;background:#2b3b8a"></div>
<svg class="a" style="left:63px;top:420px" width="16" height="16" viewBox="0 2 16 16"><rect x="2" y="2" width="3" height="2" fill="#f0b8a0"/><rect x="1.5" y="5" width="4" height="2" fill="#e8a070"/><rect x="1.5" y="11" width="4" height="2" fill="#e8a070"/><rect x="2" y="14" width="3" height="3" fill="#f0c8a0"/><rect x="9" y="4" width="5" height="4" fill="#e8e070" stroke="#c8d8c0" stroke-width="0.5"/><rect x="9" y="10" width="5" height="4" fill="#e8e070" stroke="#c8d8c0" stroke-width="0.5"/><path d="M5.5 6 H9 M5.5 12 H9" stroke="#40c040" stroke-width="0.9"/><path d="M3.5 7 V11" stroke="#d0d8e0" stroke-width="0.8"/></svg>
<div class="t s" style="left:83.5px;top:423px;font-size:10.5px;color:#0e1d84;font-weight:normal;">Gammes PDAP</div>
<svg class="a" style="left:63px;top:436px" width="17" height="16"><path d="M1 8 L11 3.5 L16.5 6 L6.5 10.5Z" fill="#e83a3a"/><path d="M1 8 L6.5 10.5 V13 L1 10.5Z" fill="#b01818"/><path d="M6.5 10.5 L16.5 6 V8.5 L6.5 13Z" fill="#f4f0f0"/><path d="M6.5 13 L16.5 8.5" stroke="#c02020" stroke-width="0.8"/><path d="M8 6 L10 7 L12 5.5" stroke="#ffd0d0" stroke-width="0.8" fill="none"/></svg>
<div class="t s" style="left:83.5px;top:439px;font-size:10.5px;color:#0e1d84;font-weight:normal;">Dictionnaire des Etapes</div>
<div class="a" style="left:28px;top:456px;width:9px;height:9px;background:linear-gradient(#fff 40%,#dcdcdc);border:1px solid #8c8c8c;border-radius:1px"></div>
<div class="a" style="left:30px;top:460px;width:5px;height:1px;background:#2b3b8a"></div>
<div class="a" style="left:32px;top:458px;width:1px;height:5px;background:#2b3b8a"></div>
<svg class="a" style="left:44px;top:452px" width="17" height="17"><path d="M5 5 L14.5 14.5" stroke="#8c8c8c" stroke-width="2.4" stroke-linecap="round"/><path d="M5.5 1 A4 4 0 1 0 8.5 6.5 L6.5 4.5 L5 5.5 L3.8 4.2 L4.8 2.8Z" fill="#a8a8a8"/><path d="M13 13 L15 15" stroke="#b8b8b8" stroke-width="1"/></svg>
<div class="t s" style="left:65.0px;top:455px;font-size:10.5px;color:#0e1d84;font-weight:normal;">Ressources</div>
<div class="a" style="left:28px;top:472px;width:9px;height:9px;background:linear-gradient(#fff 40%,#dcdcdc);border:1px solid #8c8c8c;border-radius:1px"></div>
<div class="a" style="left:30px;top:476px;width:5px;height:1px;background:#2b3b8a"></div>
<div class="a" style="left:32px;top:474px;width:1px;height:5px;background:#2b3b8a"></div>
<svg class="a" style="left:44px;top:468px" width="16" height="16"><circle cx="8" cy="8" r="7.5" fill="#2c4fb8"/><text x="8" y="12.5" font-size="12" font-weight="bold" font-family="Liberation Sans" text-anchor="middle" fill="#fff">?</text></svg>
<div class="t s" style="left:65.0px;top:471px;font-size:10.5px;color:#0e1d84;font-weight:normal;">Config. Commerciale</div>
<div class="a" style="left:28px;top:488px;width:9px;height:9px;background:linear-gradient(#fff 40%,#dcdcdc);border:1px solid #8c8c8c;border-radius:1px"></div>
<div class="a" style="left:30px;top:492px;width:5px;height:1px;background:#2b3b8a"></div>
<div class="a" style="left:32px;top:490px;width:1px;height:5px;background:#2b3b8a"></div>
<svg class="a" style="left:44px;top:484px" width="15" height="15" viewBox="0 0 15 15"><defs><radialGradient id="gg25" cx="0.45" cy="0.35" r="0.7"><stop offset="0" stop-color="#a8f0ff"/><stop offset="0.45" stop-color="#2f8fd8"/><stop offset="1" stop-color="#0c2a8a"/></radialGradient></defs><circle cx="7.5" cy="7.5" r="7" fill="url(#gg25)"/><path d="M2 4 Q4 2 6 3 Q5 6 3 7 Q1.5 6 2 4Z M9 2 Q12 3 13 5 Q11 6 10 5Z M5 10 Q8 9 10 11 Q9 13 7 13 Q5 12 5 10Z" fill="#27b33a"/></svg>
<div class="t s" style="left:65.0px;top:487px;font-size:10.5px;color:#0e1d84;font-weight:normal;">Config. Web</div>
<div class="a" style="left:28px;top:504px;width:9px;height:9px;background:linear-gradient(#fff 40%,#dcdcdc);border:1px solid #8c8c8c;border-radius:1px"></div>
<div class="a" style="left:30px;top:508px;width:5px;height:1px;background:#2b3b8a"></div>
<div class="a" style="left:32px;top:506px;width:1px;height:5px;background:#2b3b8a"></div>
<svg class="a" style="left:44px;top:500px" width="16" height="16"><rect x="1" y="1" width="11" height="14" fill="#a0a8a0"/><rect x="3" y="2" width="9" height="4" fill="#f4d24a"/><rect x="3" y="7" width="9" height="3" fill="#f4d24a"/><rect x="7" y="8" width="8" height="4" fill="#4ab8e8"/></svg>
<div class="t s" style="left:65.0px;top:503px;font-size:10.5px;color:#0e1d84;font-weight:normal;">Config. Propriétés</div>
<div class="a" style="left:374px;top:177px;width:888px;height:23px;background:linear-gradient(#ffe0a0,#ffc878 40%,#ff9e44)"></div>
<svg class="a" style="left:379px;top:184px" width="16" height="14"><g fill="none" stroke="#e6d8c0" stroke-width="0.8"><path d="M1.5 5 L5 2 L8 5 L11 2 L14.5 5 L11 8 L8 10.5 L5 8Z"/></g><rect x="4" y="1" width="2.4" height="2" fill="#f2e88a"/><rect x="9.8" y="1" width="2.4" height="2" fill="#f2e88a"/><rect x="7" y="4" width="2.4" height="2" fill="#efe78a"/><rect x="0.5" y="4" width="2.6" height="2.2" fill="#f09a80"/><rect x="13" y="4" width="2.6" height="2.2" fill="#f09a80"/><rect x="4" y="7" width="2.2" height="2" fill="#5f8fc0"/><rect x="10" y="7" width="2.2" height="2" fill="#5f8fc0"/><rect x="7" y="9.5" width="2.2" height="2" fill="#6a9ac8"/></svg>
<div class="t " style="left:399.3px;top:183px;font-size:11.6px;color:#1c2258;font-weight:normal;">Gammes Génér. : Définition des Gammes Génériques</div>
<div class="a" style="left:374px;top:200px;width:888px;height:22px;background:#fff"></div>
<div class="a" style="left:374px;top:222px;width:888px;height:1px;background:#82abe2"></div>
<div class="a" style="left:1014px;top:202px;width:156px;height:21px;background:linear-gradient(#fdfeff,#e1e9f5);border:1px solid #8db2e3;border-bottom:none;border-radius:3px 3px 0 0"></div>
<div class="a" style="left:1015px;top:222px;width:154px;height:1px;background:#edf2f9"></div>
<svg class="a" style="left:384px;top:203px" width="18" height="18"><path d="M1.2 4.5 L4 1.5 H17 L16.8 17 L14.5 17.5 L1 15.5 Z" fill="#3c4862"/><path d="M1.2 4.5 L4 1.5 H17 L15 5Z" fill="#4a5670"/><path d="M3 8 Q9 7 16.5 8.5" stroke="#2a3448" stroke-width="0.8" fill="none"/><circle cx="2.8" cy="9" r="0.9" fill="#c8a040"/><circle cx="9.8" cy="8.5" r="1" fill="#c8a040"/><rect x="9.4" y="9.5" width="1.2" height="5" fill="#0a0e18"/><path d="M16.8 3 V17" stroke="#1a2030" stroke-width="1"/></svg>
<div class="t " style="left:404.5px;top:206px;font-size:11.6px;color:#1f3a9c;font-weight:normal;">Gestion Commerciale ...</div>
<svg class="a" style="left:545px;top:204px" width="16" height="16"><circle cx="8" cy="8" r="7.3" fill="#f8f8fc" stroke="#7a8aa8" stroke-width="1.1"/><circle cx="8" cy="8" r="5.8" fill="none" stroke="#c8d4e8" stroke-width="0.8"/><path d="M8 3.5 V8 L10.5 9.5" stroke="#556" stroke-width="0.9" fill="none"/><path d="M8 1.5 V2.5 M14.5 8 H13.5 M8 14.5 V13.5 M1.5 8 H2.5" stroke="#889" stroke-width="0.8"/></svg>
<div class="t " style="left:564.8px;top:206px;font-size:11.6px;color:#1f3a9c;font-weight:normal;">Liens Res./UME Charg...</div>
<svg class="a" style="left:704px;top:204px" width="17" height="16"><path d="M1 8 L11 3.5 L16.5 6 L6.5 10.5Z" fill="#e83a3a"/><path d="M1 8 L6.5 10.5 V13 L1 10.5Z" fill="#b01818"/><path d="M6.5 10.5 L16.5 6 V8.5 L6.5 13Z" fill="#f4f0f0"/><path d="M6.5 13 L16.5 8.5" stroke="#c02020" stroke-width="0.8"/><path d="M8 6 L10 7 L12 5.5" stroke="#ffd0d0" stroke-width="0.8" fill="none"/></svg>
<div class="t " style="left:724.5px;top:206px;font-size:11.6px;color:#1f3a9c;font-weight:normal;">Dictionnaire des Etapes</div>
<svg class="a" style="left:858px;top:204px" width="17" height="16"><path d="M2 15 L8.5 1.5 L15 15" stroke="#e08a3a" stroke-width="1.6" fill="none"/><path d="M1 9 H16" stroke="#d84040" stroke-width="1.3"/><path d="M5 10 L12 10" stroke="#333" stroke-width="0.8"/></svg>
<div class="t " style="left:878.5px;top:206px;font-size:11.6px;color:#1f3a9c;font-weight:normal;">UME Charges : Unités ...</div>
<svg class="a" style="left:1019px;top:205px" width="16" height="14"><g fill="none" stroke="#e6d8c0" stroke-width="0.8"><path d="M1.5 5 L5 2 L8 5 L11 2 L14.5 5 L11 8 L8 10.5 L5 8Z"/></g><rect x="4" y="1" width="2.4" height="2" fill="#f2e88a"/><rect x="9.8" y="1" width="2.4" height="2" fill="#f2e88a"/><rect x="7" y="4" width="2.4" height="2" fill="#efe78a"/><rect x="0.5" y="4" width="2.6" height="2.2" fill="#f09a80"/><rect x="13" y="4" width="2.6" height="2.2" fill="#f09a80"/><rect x="4" y="7" width="2.2" height="2" fill="#5f8fc0"/><rect x="10" y="7" width="2.2" height="2" fill="#5f8fc0"/><rect x="7" y="9.5" width="2.2" height="2" fill="#6a9ac8"/></svg>
<div class="t " style="left:1038.4px;top:206px;font-size:11.6px;color:#1f3a9c;font-weight:normal;">Gammes Génér. : Défi...</div>
<div class="a" style="left:374px;top:223px;width:888px;height:5px;background:#eeeeee"></div>
<div class="a" style="left:374px;top:228px;width:734px;height:711px;background:#fff;border-top:1px solid #646464;border-left:1px solid #646464;border-right:1px solid #9a9a9a"></div>
<div class="a" style="left:375px;top:229px;width:33px;height:18px;background:#a8c4ea;border-right:1px solid #8fb0dc;border-bottom:1px solid #8fb0dc"></div>
<svg class="a" style="left:394px;top:234px" width="10" height="10"><path d="M9 1 V9 H1Z" fill="#fff" opacity="0.85"/></svg>
<div class="a" style="left:408px;top:229px;width:105px;height:18px;background:linear-gradient(#fbfcfe,#dfe7f2);border-right:1px solid #a5bcd9;border-bottom:1px solid #9fb7d6"></div>
<div class="a" style="left:512px;top:229px;width:106px;height:18px;background:linear-gradient(#fde7b8,#f7c57a);border:1px solid #f0a53c"></div>
<div class="a" style="left:617px;top:229px;width:90px;height:18px;background:linear-gradient(#fbfcfe,#dfe7f2);border-right:1px solid #a5bcd9;border-bottom:1px solid #9fb7d6"></div>
<div class="a" style="left:706px;top:229px;width:51px;height:18px;background:linear-gradient(#fbfcfe,#dfe7f2);border-right:1px solid #a5bcd9;border-bottom:1px solid #9fb7d6"></div>
<div class="a" style="left:756px;top:229px;width:41px;height:18px;background:linear-gradient(#fbfcfe,#dfe7f2);border-right:1px solid #a5bcd9;border-bottom:1px solid #9fb7d6"></div>
<div class="a" style="left:796px;top:229px;width:59px;height:18px;background:linear-gradient(#fbfcfe,#dfe7f2);border-right:1px solid #a5bcd9;border-bottom:1px solid #9fb7d6"></div>
<div class="a" style="left:854px;top:229px;width:65px;height:18px;background:linear-gradient(#fbfcfe,#dfe7f2);border-right:1px solid #a5bcd9;border-bottom:1px solid #9fb7d6"></div>
<div class="a" style="left:918px;top:229px;width:51px;height:18px;background:linear-gradient(#fbfcfe,#dfe7f2);border-right:1px solid #a5bcd9;border-bottom:1px solid #9fb7d6"></div>
<div class="a" style="left:968px;top:229px;width:57px;height:18px;background:linear-gradient(#fbfcfe,#dfe7f2);border-right:1px solid #a5bcd9;border-bottom:1px solid #9fb7d6"></div>
<div class="a" style="left:408px;top:247px;width:616px;height:16px;background:#ffffff"></div>
<div class="a" style="left:375px;top:247px;width:33px;height:16px;background:#dfe8f6;border-bottom:1px solid #8fb0dc;border-right:1px solid #8fb0dc"></div>
<div class="a" style="left:408px;top:262px;width:616px;height:1px;background-image:linear-gradient(90deg,#c8c8c8 50%,transparent 50%);background-size:2px 1px"></div>
<div class="a" style="left:408px;top:263px;width:616px;height:16px;background:#efefef"></div>
<div class="a" style="left:375px;top:263px;width:33px;height:16px;background:#dfe8f6;border-bottom:1px solid #8fb0dc;border-right:1px solid #8fb0dc"></div>
<div class="a" style="left:408px;top:278px;width:616px;height:1px;background-image:linear-gradient(90deg,#c8c8c8 50%,transparent 50%);background-size:2px 1px"></div>
<div class="a" style="left:408px;top:279px;width:616px;height:16px;background:#ffffff"></div>
<div class="a" style="left:375px;top:279px;width:33px;height:16px;background:#dfe8f6;border-bottom:1px solid #8fb0dc;border-right:1px solid #8fb0dc"></div>
<div class="a" style="left:408px;top:294px;width:616px;height:1px;background-image:linear-gradient(90deg,#c8c8c8 50%,transparent 50%);background-size:2px 1px"></div>
<div class="a" style="left:408px;top:295px;width:616px;height:16px;background:#efefef"></div>
<div class="a" style="left:375px;top:295px;width:33px;height:16px;background:#dfe8f6;border-bottom:1px solid #8fb0dc;border-right:1px solid #8fb0dc"></div>
<div class="a" style="left:408px;top:310px;width:616px;height:1px;background-image:linear-gradient(90deg,#c8c8c8 50%,transparent 50%);background-size:2px 1px"></div>
<div class="a" style="left:408px;top:311px;width:616px;height:16px;background:#ffffff"></div>
<div class="a" style="left:375px;top:311px;width:33px;height:16px;background:#dfe8f6;border-bottom:1px solid #8fb0dc;border-right:1px solid #8fb0dc"></div>
<div class="a" style="left:408px;top:326px;width:616px;height:1px;background-image:linear-gradient(90deg,#c8c8c8 50%,transparent 50%);background-size:2px 1px"></div>
<div class="a" style="left:408px;top:327px;width:616px;height:16px;background:#efefef"></div>
<div class="a" style="left:375px;top:327px;width:33px;height:16px;background:#f9c57c;border-bottom:1px solid #8fb0dc;border-right:1px solid #8fb0dc"></div>
<div class="a" style="left:408px;top:342px;width:616px;height:1px;background-image:linear-gradient(90deg,#c8c8c8 50%,transparent 50%);background-size:2px 1px"></div>
<div class="a" style="left:408px;top:343px;width:616px;height:16px;background:#ffffff"></div>
<div class="a" style="left:375px;top:343px;width:33px;height:16px;background:#dfe8f6;border-bottom:1px solid #8fb0dc;border-right:1px solid #8fb0dc"></div>
<div class="a" style="left:408px;top:358px;width:616px;height:1px;background-image:linear-gradient(90deg,#c8c8c8 50%,transparent 50%);background-size:2px 1px"></div>
<div class="a" style="left:408px;top:359px;width:616px;height:16px;background:#efefef"></div>
<div class="a" style="left:375px;top:359px;width:33px;height:16px;background:#dfe8f6;border-bottom:1px solid #8fb0dc;border-right:1px solid #8fb0dc"></div>
<div class="a" style="left:408px;top:374px;width:616px;height:1px;background-image:linear-gradient(90deg,#c8c8c8 50%,transparent 50%);background-size:2px 1px"></div>
<div class="a" style="left:512px;top:247px;width:1px;height:128px;background-image:linear-gradient(#c8c8c8 50%,transparent 50%);background-size:1px 2px"></div>
<div class="a" style="left:617px;top:247px;width:1px;height:128px;background-image:linear-gradient(#c8c8c8 50%,transparent 50%);background-size:1px 2px"></div>
<div class="a" style="left:706px;top:247px;width:1px;height:128px;background-image:linear-gradient(#c8c8c8 50%,transparent 50%);background-size:1px 2px"></div>
<div class="a" style="left:756px;top:247px;width:1px;height:128px;background-image:linear-gradient(#c8c8c8 50%,transparent 50%);background-size:1px 2px"></div>
<div class="a" style="left:796px;top:247px;width:1px;height:128px;background-image:linear-gradient(#c8c8c8 50%,transparent 50%);background-size:1px 2px"></div>
<div class="a" style="left:854px;top:247px;width:1px;height:128px;background-image:linear-gradient(#c8c8c8 50%,transparent 50%);background-size:1px 2px"></div>
<div class="a" style="left:918px;top:247px;width:1px;height:128px;background-image:linear-gradient(#c8c8c8 50%,transparent 50%);background-size:1px 2px"></div>
<div class="a" style="left:968px;top:247px;width:1px;height:128px;background-image:linear-gradient(#c8c8c8 50%,transparent 50%);background-size:1px 2px"></div>
<div class="a" style="left:1024px;top:247px;width:1px;height:128px;background-image:linear-gradient(#c8c8c8 50%,transparent 50%);background-size:1px 2px"></div>
<div class="a" style="left:1024px;top:229px;width:1px;height:146px;background:#a0a0a0"></div>
<div class="a" style="left:375px;top:374px;width:650px;height:1px;background:#a0a0a0"></div>
<div class="t " style="left:408px;width:104px;text-align:center;top:234px;font-size:10.4px;color:#000;font-weight:normal;">Gamme Générique</div>
<div class="t " style="left:512px;width:105px;text-align:center;top:234px;font-size:10.4px;color:#000;font-weight:normal;">Désignation</div>
<div class="t " style="left:617px;width:89px;text-align:center;top:234px;font-size:10.4px;color:#000;font-weight:normal;">Statut Requête</div>
<div class="t " style="left:706px;width:50px;text-align:center;top:234px;font-size:10.4px;color:#000;font-weight:normal;">Err.Req.</div>
<div class="t " style="left:756px;width:40px;text-align:center;top:234px;font-size:10.4px;color:#000;font-weight:normal;">Dispo.</div>
<div class="t " style="left:796px;width:58px;text-align:center;top:234px;font-size:10.4px;color:#000;font-weight:normal;">Date Blo.</div>
<div class="t " style="left:854px;width:64px;text-align:center;top:234px;font-size:10.4px;color:#000;font-weight:normal;">Heure Blo.</div>
<div class="t " style="left:918px;width:50px;text-align:center;top:234px;font-size:10.4px;color:#000;font-weight:normal;">Util. Blo.</div>
<div class="t " style="left:968px;width:56px;text-align:center;top:234px;font-size:10.4px;color:#000;font-weight:normal;">Rai. Blo.</div>
<div class="t " style="left:410.0px;top:251px;font-size:10.4px;color:#000;font-weight:normal;">ACIER</div>
<div class="t " style="left:515.5px;top:251px;font-size:10.4px;color:#000;font-weight:normal;">Menuiseries ACIER</div>
<div class="t " style="left:620.3px;top:251px;font-size:10.4px;color:#000;font-weight:normal;">Dispo.</div>
<div class="t " style="left:854px;width:64px;text-align:center;top:250px;font-size:10.9px;color:#000;font-weight:normal;">00:00:00</div>
<div class="a" style="left:724px;top:248px;width:13px;height:13px;background:#fff;border:1px solid #333"></div>
<div class="a" style="left:768px;top:248px;width:13px;height:13px;background:#fff;border:1px solid #333"></div>
<svg class="a" style="left:768px;top:248px" width="13" height="13"><path d="M2.5 6.5 L5.2 9.2 L10.5 3.5" stroke="#333" stroke-width="1.1" fill="none"/></svg>
<div class="t " style="left:410.0px;top:267px;font-size:10.4px;color:#000;font-weight:normal;">ALU</div>
<div class="t " style="left:515.5px;top:267px;font-size:10.4px;color:#000;font-weight:normal;">Menuiseries ALU</div>
<div class="t " style="left:620.3px;top:267px;font-size:10.4px;color:#000;font-weight:normal;">Dispo.</div>
<div class="t " style="left:854px;width:64px;text-align:center;top:266px;font-size:10.9px;color:#000;font-weight:normal;">00:00:00</div>
<div class="a" style="left:724px;top:264px;width:13px;height:13px;background:#fff;border:1px solid #333"></div>
<div class="a" style="left:768px;top:264px;width:13px;height:13px;background:#fff;border:1px solid #333"></div>
<svg class="a" style="left:768px;top:264px" width="13" height="13"><path d="M2.5 6.5 L5.2 9.2 L10.5 3.5" stroke="#333" stroke-width="1.1" fill="none"/></svg>
<div class="t " style="left:410.0px;top:283px;font-size:10.4px;color:#000;font-weight:normal;">BOIS</div>
<div class="t " style="left:515.5px;top:283px;font-size:10.4px;color:#000;font-weight:normal;">Menuiseries BOIS</div>
<div class="t " style="left:620.3px;top:283px;font-size:10.4px;color:#000;font-weight:normal;">Dispo.</div>
<div class="t " style="left:854px;width:64px;text-align:center;top:282px;font-size:10.9px;color:#000;font-weight:normal;">00:00:00</div>
<div class="a" style="left:724px;top:280px;width:13px;height:13px;background:#fff;border:1px solid #333"></div>
<div class="a" style="left:768px;top:280px;width:13px;height:13px;background:#fff;border:1px solid #333"></div>
<svg class="a" style="left:768px;top:280px" width="13" height="13"><path d="M2.5 6.5 L5.2 9.2 L10.5 3.5" stroke="#333" stroke-width="1.1" fill="none"/></svg>
<div class="t " style="left:410.0px;top:299px;font-size:10.4px;color:#000;font-weight:normal;">MIXTE</div>
<div class="t " style="left:515.5px;top:299px;font-size:10.4px;color:#000;font-weight:normal;">Menuiseries MIXTE</div>
<div class="t " style="left:620.3px;top:299px;font-size:10.4px;color:#000;font-weight:normal;">Dispo.</div>
<div class="t " style="left:854px;width:64px;text-align:center;top:298px;font-size:10.9px;color:#000;font-weight:normal;">00:00:00</div>
<div class="a" style="left:724px;top:296px;width:13px;height:13px;background:#fff;border:1px solid #333"></div>
<div class="a" style="left:768px;top:296px;width:13px;height:13px;background:#fff;border:1px solid #333"></div>
<svg class="a" style="left:768px;top:296px" width="13" height="13"><path d="M2.5 6.5 L5.2 9.2 L10.5 3.5" stroke="#333" stroke-width="1.1" fill="none"/></svg>
<div class="t " style="left:410.0px;top:315px;font-size:10.4px;color:#000;font-weight:normal;">PG</div>
<div class="t " style="left:515.5px;top:315px;font-size:10.4px;color:#000;font-weight:normal;">Menuiseries PG</div>
<div class="t " style="left:620.3px;top:315px;font-size:10.4px;color:#000;font-weight:normal;">Dispo.</div>
<div class="t " style="left:854px;width:64px;text-align:center;top:314px;font-size:10.9px;color:#000;font-weight:normal;">00:00:00</div>
<div class="a" style="left:724px;top:312px;width:13px;height:13px;background:#fff;border:1px solid #333"></div>
<div class="a" style="left:768px;top:312px;width:13px;height:13px;background:#fff;border:1px solid #333"></div>
<svg class="a" style="left:768px;top:312px" width="13" height="13"><path d="M2.5 6.5 L5.2 9.2 L10.5 3.5" stroke="#333" stroke-width="1.1" fill="none"/></svg>
<div class="t " style="left:410.0px;top:331px;font-size:10.4px;color:#000;font-weight:normal;">PRSPE</div>
<div class="t " style="left:515.5px;top:331px;font-size:10.4px;color:#000;font-weight:normal;">Produits spécifiques</div>
<div class="t " style="left:620.3px;top:331px;font-size:10.4px;color:#000;font-weight:normal;">Dispo.</div>
<div class="t " style="left:854px;width:64px;text-align:center;top:330px;font-size:10.9px;color:#000;font-weight:normal;">00:00:00</div>
<div class="a" style="left:724px;top:328px;width:13px;height:13px;background:#fff;border:1px solid #333"></div>
<div class="a" style="left:768px;top:328px;width:13px;height:13px;background:#fff;border:1px solid #333"></div>
<svg class="a" style="left:768px;top:328px" width="13" height="13"><path d="M2.5 6.5 L5.2 9.2 L10.5 3.5" stroke="#333" stroke-width="1.1" fill="none"/></svg>
<div class="t " style="left:410.0px;top:347px;font-size:10.4px;color:#000;font-weight:normal;">PVC</div>
<div class="t " style="left:515.5px;top:347px;font-size:10.4px;color:#000;font-weight:normal;">Menuiseries PVC</div>
<div class="t " style="left:620.3px;top:347px;font-size:10.4px;color:#000;font-weight:normal;">Dispo.</div>
<div class="t " style="left:854px;width:64px;text-align:center;top:346px;font-size:10.9px;color:#000;font-weight:normal;">00:00:00</div>
<div class="a" style="left:724px;top:344px;width:13px;height:13px;background:#fff;border:1px solid #333"></div>
<div class="a" style="left:768px;top:344px;width:13px;height:13px;background:#fff;border:1px solid #333"></div>
<svg class="a" style="left:768px;top:344px" width="13" height="13"><path d="M2.5 6.5 L5.2 9.2 L10.5 3.5" stroke="#333" stroke-width="1.1" fill="none"/></svg>
<div class="t " style="left:410.0px;top:363px;font-size:10.4px;color:#000;font-weight:normal;">VR</div>
<div class="t " style="left:515.5px;top:363px;font-size:10.4px;color:#000;font-weight:normal;">Menuiseries VR</div>
<div class="t " style="left:620.3px;top:363px;font-size:10.4px;color:#000;font-weight:normal;">Dispo.</div>
<div class="t " style="left:854px;width:64px;text-align:center;top:362px;font-size:10.9px;color:#000;font-weight:normal;">00:00:00</div>
<div class="a" style="left:724px;top:360px;width:13px;height:13px;background:#fff;border:1px solid #333"></div>
<div class="a" style="left:768px;top:360px;width:13px;height:13px;background:#fff;border:1px solid #333"></div>
<svg class="a" style="left:768px;top:360px" width="13" height="13"><path d="M2.5 6.5 L5.2 9.2 L10.5 3.5" stroke="#333" stroke-width="1.1" fill="none"/></svg>
<div class="a" style="left:511px;top:326px;width:108px;height:18px;border:2px solid #000"></div>
<div class="a" style="left:1108px;top:228px;width:154px;height:711px;background:#f0f0f0"></div>
<div class="a" style="left:1114px;top:250px;width:1px;height:689px;background:#a0a0a0"></div>
<div class="a" style="left:1115px;top:250px;width:147px;height:1px;background:#fbfbfb"></div>
<svg class="a" style="left:1114px;top:230px" width="148" height="22"><path d="M6 21 Q8 21 10 17 L15 5 Q17 2 21 2 H80 Q84 2 86 5 L94 21" fill="#f7f7f7" stroke="#9a9a9a" stroke-width="1"/><path d="M94 21 L87 5 Q89 2 93 2 H148" fill="#f2f2f2" stroke="#9a9a9a" stroke-width="1"/><path d="M0.5 21.5 H6" stroke="#9a9a9a"/></svg>
<div class="t " style="left:1131.2px;top:235px;font-size:11.6px;color:#000;font-weight:bold;">Généralités</div>
<div class="t " style="left:1207.0px;top:235px;font-size:11.6px;color:#000;font-weight:normal;">Gestion Info</div>
<div class="t " style="right:24.5px;top:260px;font-size:10.4px;color:#000;font-weight:normal;">Gamme Génériqu</div>
<div class="t " style="right:16.0px;top:279px;font-size:10.4px;color:#000;font-weight:normal;">Etat</div>
<div class="t " style="right:16.0px;top:298px;font-size:10.4px;color:#000;font-weight:normal;">Désignation</div>
<div class="t " style="right:16.0px;top:317px;font-size:10.4px;color:#000;font-weight:normal;">Désignation Courte</div>
<div class="t " style="right:16.0px;top:336px;font-size:10.4px;color:#000;font-weight:normal;">Mot Directeur</div>
<div class="t " style="right:16.0px;top:357px;font-size:10.4px;color:#000;font-weight:normal;">Famille</div>
<div class="t " style="right:16.0px;top:380px;font-size:10.4px;color:#000;font-weight:normal;">Sous-Famille</div>
<div class="t " style="right:16.0px;top:401px;font-size:10.4px;color:#000;font-weight:normal;">Commentaire</div>
<div class="t " style="right:18.3px;top:482px;font-size:10.4px;color:#000;font-weight:normal;">Type Durée Etape</div>
<div class="t " style="right:15.7px;top:502px;font-size:10.4px;color:#000;font-weight:normal;">Type Durée Figée</div>
<div class="t " style="right:23.7px;top:523px;font-size:10.4px;color:#000;font-weight:normal;">UME Temps / Défau</div>
<div class="t " style="right:16.0px;top:544px;font-size:10.4px;color:#000;font-weight:normal;">Quantité / Défaut</div>
<div class="t " style="right:16.0px;top:565px;font-size:10.4px;color:#000;font-weight:normal;">Re. Charge / Défaut</div>
<div class="t " style="right:16.0px;top:586px;font-size:10.4px;color:#000;font-weight:normal;">Calendrier Local</div>
<div class="a" style="left:1259px;top:350px;width:3px;height:20px;background:#d4d4d4;border:1px solid #c0c0c0;border-right:none"></div>
<div class="a" style="left:1259px;top:373px;width:3px;height:20px;background:#d4d4d4;border:1px solid #c0c0c0;border-right:none"></div>
<div class="a" style="left:1259px;top:474px;width:3px;height:21px;background:#d4d4d4;border:1px solid #c0c0c0;border-right:none"></div>
<div class="a" style="left:1259px;top:516px;width:3px;height:20px;background:#d4d4d4;border:1px solid #c0c0c0;border-right:none"></div>
<div class="a" style="left:1259px;top:558px;width:3px;height:21px;background:#d4d4d4;border:1px solid #c0c0c0;border-right:none"></div>
<div class="a" style="left:1258px;top:395px;width:4px;height:76px;background:#fff;border:1px solid #7a7a7a;border-right:none"></div>
<div class="a" style="left:1259px;top:502px;width:3px;height:8px;background:#fff;border:1px solid #8a8a8a;border-right:none"></div>
<div class="a" style="left:547px;top:340px;width:252px;height:451px;background:rgba(0,0,0,0.42);filter:blur(1.2px)"></div>
<div class="a" style="left:545px;top:338px;width:252px;height:450px;background:#f2f2f2;border:1px solid #d0d0d0"></div>
<div class="a" style="left:576px;top:476px;width:218px;height:1px;background:#d7d7d7"></div>
<div class="a" style="left:576px;top:549px;width:218px;height:1px;background:#d7d7d7"></div>
<div class="a" style="left:576px;top:579px;width:218px;height:1px;background:#d7d7d7"></div>
<div class="a" style="left:576px;top:607px;width:218px;height:1px;background:#d7d7d7"></div>
<div class="a" style="left:576px;top:658px;width:218px;height:1px;background:#d7d7d7"></div>
<div class="a" style="left:576px;top:709px;width:218px;height:1px;background:#d7d7d7"></div>
<div class="a" style="left:576px;top:738px;width:218px;height:1px;background:#d7d7d7"></div>
<div class="a" style="left:547px;top:553px;width:244px;height:22px;background:#91c9f7"></div>
<div class="t " style="left:580.6px;top:346px;font-size:12px;color:#000;font-weight:normal;">Création (F9)</div>
<div class="t " style="left:580.6px;top:368px;font-size:12px;color:#000;font-weight:normal;">Modification (F1)</div>
<div class="t " style="left:580.6px;top:390px;font-size:12px;color:#000;font-weight:normal;">Modification Globale (Maj+F1)</div>
<div class="t " style="left:580.6px;top:412px;font-size:12px;color:#000;font-weight:normal;">Duplication (F7)</div>
<div class="t " style="left:580.6px;top:434px;font-size:12px;color:#000;font-weight:normal;">Suppression (F6)</div>
<div class="t " style="left:580.6px;top:456px;font-size:12px;color:#000;font-weight:normal;">Détail (F8)</div>
<div class="t " style="left:580.6px;top:485px;font-size:12px;color:#000;font-weight:normal;">Accès Consultation Gamme</div>
<div class="t " style="left:580.6px;top:507px;font-size:12px;color:#000;font-weight:normal;">Accès Gestion Gamme</div>
<div class="t " style="left:580.6px;top:529px;font-size:12px;color:#6d6d6d;font-weight:normal;">Déblocage Gamme</div>
<div class="t " style="left:580.6px;top:558px;font-size:12px;color:#000;font-weight:normal;">Env. Requêtes</div>
<div class="t " style="left:580.6px;top:587px;font-size:12px;color:#000;font-weight:normal;">Test</div>
<div class="t " style="left:580.6px;top:616px;font-size:12px;color:#000;font-weight:normal;">Exportation</div>
<div class="t " style="left:580.6px;top:638px;font-size:12px;color:#000;font-weight:normal;">Importation de Données</div>
<div class="t " style="left:580.6px;top:667px;font-size:12px;color:#000;font-weight:normal;">Génération Gamme</div>
<div class="t " style="left:580.6px;top:689px;font-size:12px;color:#000;font-weight:normal;">Génération Gamme / Critères</div>
<div class="t " style="left:580.6px;top:718px;font-size:12px;color:#000;font-weight:normal;">MAJ Cohérence Planification</div>
<div class="t " style="left:580.6px;top:747px;font-size:12px;color:#000;font-weight:normal;">Définition Filtres et Tris</div>
<div class="t " style="left:580.6px;top:769px;font-size:12px;color:#000;font-weight:normal;">Condition par Défaut</div>
<svg class="a" style="left:779px;top:560.0px" width="6" height="9"><path d="M1 1 L4.5 4.5 L1 8" stroke="#333" stroke-width="1" fill="none"/></svg>
<svg class="a" style="left:779px;top:589.0px" width="6" height="9"><path d="M1 1 L4.5 4.5 L1 8" stroke="#333" stroke-width="1" fill="none"/></svg>
<svg class="a" style="left:779px;top:618.0px" width="6" height="9"><path d="M1 1 L4.5 4.5 L1 8" stroke="#333" stroke-width="1" fill="none"/></svg>
<div class="a" style="left:793px;top:552px;width:263px;height:124px;background:rgba(0,0,0,0.42);filter:blur(1.2px)"></div>
<div class="a" style="left:791px;top:550px;width:263px;height:123px;background:#f2f2f2;border:1px solid #d0d0d0"></div>
<div class="a" style="left:793px;top:553px;width:258px;height:22px;background:#91c9f7"></div>
<div class="a" style="left:822px;top:600px;width:229px;height:1px;background:#d7d7d7"></div>
<div class="t " style="left:826.2px;top:558px;font-size:12px;color:#000;font-weight:normal;letter-spacing:-0.45px">Saisie Requête (F10)</div>
<div class="t " style="left:826.2px;top:580px;font-size:12px;color:#000;font-weight:normal;">Consultation Requête (F12)</div>
<div class="t " style="left:826.2px;top:609px;font-size:12px;color:#000;font-weight:normal;">Consultation Problèmes Requête</div>
<div class="t " style="left:826.2px;top:631px;font-size:12px;color:#000;font-weight:normal;">Génération Requête</div>
<div class="t " style="left:826.2px;top:653px;font-size:12px;color:#000;font-weight:normal;">Déblocage Requête</div>
<svg class="a" style="left:857px;top:565px" width="12" height="19"><path d="M1 1 V15 L4.5 11.5 L7 17 L9 16 L6.5 10.5 H11Z" fill="#fff" stroke="#000" stroke-width="1"/></svg>
<div class="a" style="left:559px;top:546px;width:146px;height:35px;background:#ff99ff;mix-blend-mode:darken"></div>
<div class="a" style="left:812px;top:542px;width:131px;height:38px;background:#ff99ff;mix-blend-mode:darken"></div>
<div class="a" style="left:242.90px;top:398.90px;width:29.20px;height:29.20px;border-radius:50%;background:#ff0000"></div>
<div class="t " style="left:242.9px;width:29.2px;text-align:center;top:406px;font-size:17.5px;color:#fff;font-weight:normal;-webkit-text-stroke:0.3px #fff">1</div>
<div class="a" style="left:533.75px;top:546.75px;width:29.50px;height:29.50px;border-radius:50%;background:#ff0000"></div>
<div class="t " style="left:533.75px;width:29.5px;text-align:center;top:554px;font-size:17.5px;color:#fff;font-weight:normal;-webkit-text-stroke:0.3px #fff">2</div>
<div class="a" style="left:786.75px;top:547.75px;width:29.50px;height:29.50px;border-radius:50%;background:#ff0000"></div>
<div class="t " style="left:786.75px;width:29.5px;text-align:center;top:555px;font-size:17.5px;color:#fff;font-weight:normal;-webkit-text-stroke:0.3px #fff">3</div>
</body></html>
